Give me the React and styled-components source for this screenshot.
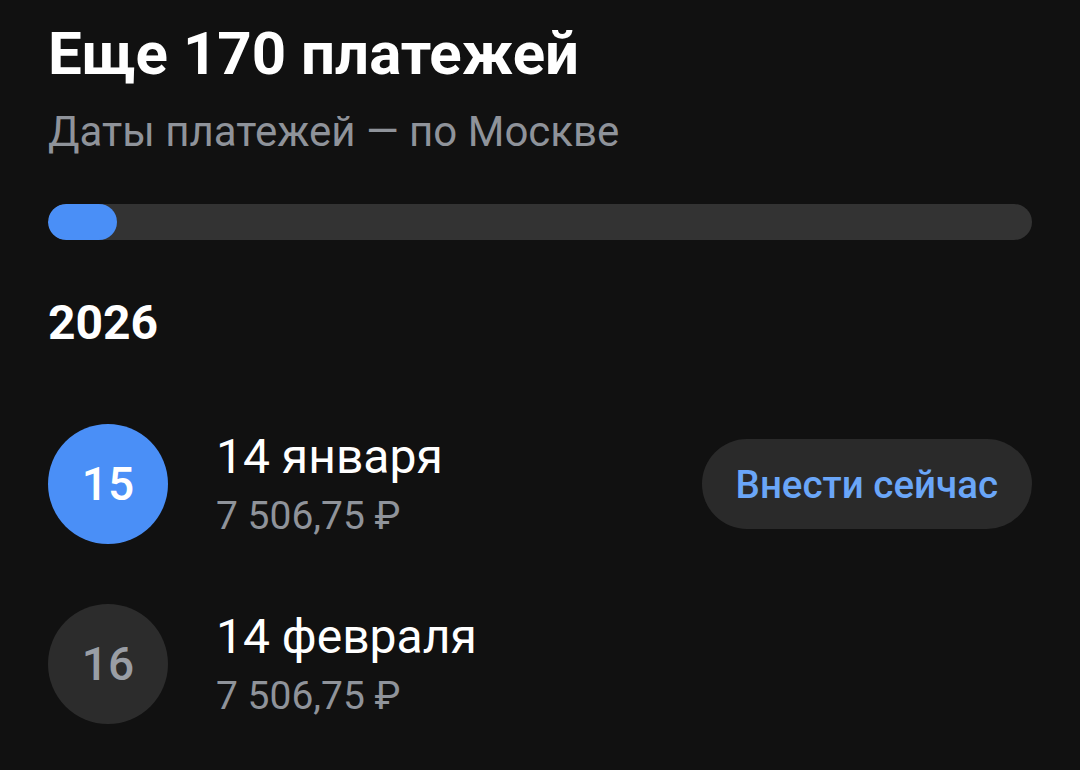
import styled, { createGlobalStyle } from "styled-components";

const Global = createGlobalStyle`
  html, body {
    margin: 0;
    padding: 0;
    background: #111111;
  }
  body {
    font-family: Roboto, "Noto Sans", sans-serif;
    color: #ffffff;
  }
`

const Page = styled.div`
  width: 1080px;
  height: 770px;
  box-sizing: border-box;
  padding: 18px 48px 0 48px;
  background: #111111;
  overflow: hidden;
`

const Title = styled.h1`
  margin: 0;
  font-size: 60px;
  font-weight: 700;
  line-height: 72px;
  color: #ffffff;
`

const Subtitle = styled.div`
  margin-top: 18px;
  font-size: 42px;
  line-height: 48px;
  color: #8f939a;
`

const Track = styled.div`
  margin-top: 48px;
  height: 36px;
  border-radius: 18px;
  background: #333333;
  overflow: hidden;
`

const Fill = styled.div`
  height: 100%;
  border-radius: 18px;
  background: #4a8ff7;
`

const Year = styled.h2`
  margin: 55px 0 0 0;
  font-size: 48px;
  font-weight: 700;
  line-height: 56px;
`

const List = styled.div`
  margin-top: 73px;
  display: flex;
  flex-direction: column;
  gap: 60px;
`

const Row = styled.div`
  display: flex;
  align-items: center;
  gap: 48px;
`

const Circle = styled.div`
  width: 120px;
  height: 120px;
  flex: none;
  border-radius: 50%;
  display: flex;
  align-items: center;
  justify-content: center;
  font-size: 46px;
  font-weight: 500;
  background: ${p => (p.$active ? "#4a8ff7" : "#2c2c2c")};
  color: ${p => (p.$active ? "#ffffff" : "#9a9ea5")};
`

const Info = styled.div`
  flex: 1;
  display: flex;
  flex-direction: column;
`

const Date = styled.div`
  font-size: 48px;
  line-height: 56px;
  color: #ffffff;
`

const Amount = styled.div`
  margin-top: 8px;
  font-size: 39px;
  line-height: 46px;
  color: #8f939a;
`

const PayButton = styled.button`
  height: 90px;
  padding: 0 34px;
  border: none;
  border-radius: 45px;
  background: #2a2a2a;
  color: #6aa6f8;
  font-family: Roboto, "Noto Sans", sans-serif;
  font-size: 38.5px;
  font-weight: 500;
  cursor: pointer;
`

const payments = [
  { n: 15, date: "14 января", amount: "7 506,75 ₽", active: true },
  { n: 16, date: "14 февраля", amount: "7 506,75 ₽", active: false },
]

export default function App() {
  const progress = 69 / 984
  return (
    <>
      <Global />
      <Page>
        <Title>Еще 170 платежей</Title>
        <Subtitle>Даты платежей — по Москве</Subtitle>
        <Track>
          <Fill style={{ width: `${progress * 100}%` }} />
        </Track>
        <Year>2026</Year>
        <List>
          {payments.map(p => (
            <Row key={p.n}>
              <Circle $active={p.active}>{p.n}</Circle>
              <Info>
                <Date>{p.date}</Date>
                <Amount>{p.amount}</Amount>
              </Info>
              {p.active && <PayButton>Внести сейчас</PayButton>}
            </Row>
          ))}
        </List>
      </Page>
    </>
  )
}
